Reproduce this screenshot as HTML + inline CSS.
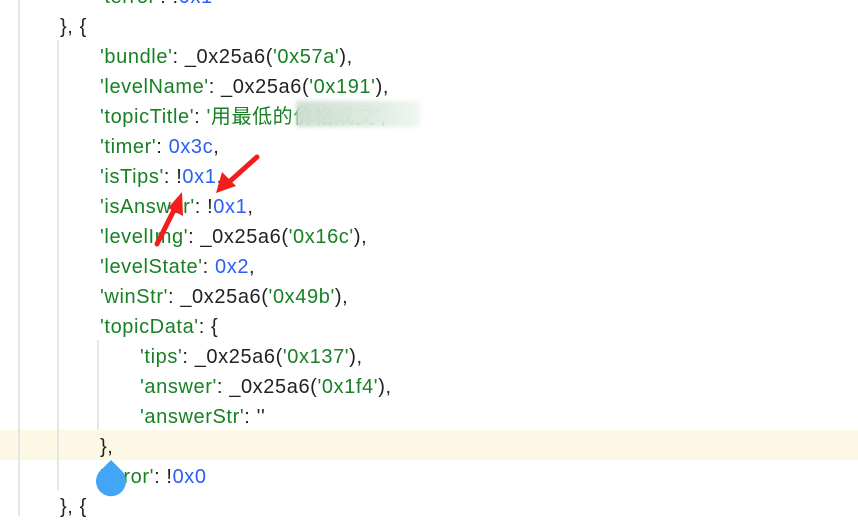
<!DOCTYPE html>
<html><head><meta charset="utf-8"><style>
body{margin:0;width:858px;height:516px;overflow:hidden;background:#fff;position:relative;font-family:"Liberation Sans","Noto Sans CJK SC",sans-serif;font-size:20px;letter-spacing:0.6px;}
.l{position:absolute;white-space:pre;line-height:30px;height:30px;color:#222;}
.g{color:#188025}.b{color:#2a5ff0}
.vg{position:absolute;width:2px;background:#e6e6e6}
</style></head><body>
<div style="position:absolute;left:0;top:430px;width:858px;height:30px;background:#fdf8e5"></div>
<div class="vg" style="left:18px;top:0;height:516px"></div>
<div class="vg" style="left:57px;top:40px;height:450px"></div>
<div class="vg" style="left:97px;top:340px;height:90px"></div>
<div class="l" style="left:100px;top:-18px"><span class="g">'terror'</span>: !<span class="b">0x1</span></div>
<div class="l" style="left:60px;top:12px">}, {</div>
<div class="l" style="left:100px;top:42px"><span class="g">'bundle'</span>: _0x25a6(<span class="g">'0x57a'</span>),</div>
<div class="l" style="left:100px;top:72px"><span class="g">'levelName'</span>: _0x25a6(<span class="g">'0x191'</span>),</div>
<div class="l" style="left:100px;top:102px"><span class="g">'topicTitle'</span>: <span class="g">'用最低的价格成交'</span>,</div>
<div class="l" style="left:100px;top:132px"><span class="g">'timer'</span>: <span class="b">0x3c</span>,</div>
<div class="l" style="left:100px;top:162px"><span class="g">'isTips'</span>: !<span class="b">0x1</span>,</div>
<div class="l" style="left:100px;top:192px"><span class="g">'isAnswer'</span>: !<span class="b">0x1</span>,</div>
<div class="l" style="left:100px;top:222px"><span class="g">'levelImg'</span>: _0x25a6(<span class="g">'0x16c'</span>),</div>
<div class="l" style="left:100px;top:252px"><span class="g">'levelState'</span>: <span class="b">0x2</span>,</div>
<div class="l" style="left:100px;top:282px"><span class="g">'winStr'</span>: _0x25a6(<span class="g">'0x49b'</span>),</div>
<div class="l" style="left:100px;top:312px"><span class="g">'topicData'</span>: {</div>
<div class="l" style="left:140px;top:342px"><span class="g">'tips'</span>: _0x25a6(<span class="g">'0x137'</span>),</div>
<div class="l" style="left:140px;top:372px"><span class="g">'answer'</span>: _0x25a6(<span class="g">'0x1f4'</span>),</div>
<div class="l" style="left:140px;top:402px"><span class="g">'answerStr'</span>: ''</div>
<div class="l" style="left:100px;top:432px">},</div>
<div class="l" style="left:100px;top:462px"><span class="g">'error'</span>: !<span class="b">0x0</span></div>
<div class="l" style="left:60px;top:492px">}, {</div>
<div style="position:absolute;left:296px;top:101px;width:124px;height:26px;background:linear-gradient(90deg,rgba(205,222,210,.97),rgba(220,234,224,.97) 60%,rgba(238,245,240,.85));filter:blur(2px)"></div>
<svg style="position:absolute;left:0;top:0" width="858" height="516">
<path d="M111 460 L122 471 A15 15 0 1 1 100 471 Z" fill="#42a5f5"/>
<line x1="257" y1="157" x2="228" y2="183" stroke="#f21d1d" stroke-width="5" stroke-linecap="round"/>
<polygon points="216,193 222,172 236,186" fill="#f21d1d"/>
<line x1="157" y1="244" x2="176" y2="206" stroke="#f21d1d" stroke-width="5" stroke-linecap="round"/>
<polygon points="182,192 183,216 168,208" fill="#f21d1d"/>
</svg>
</body></html>
